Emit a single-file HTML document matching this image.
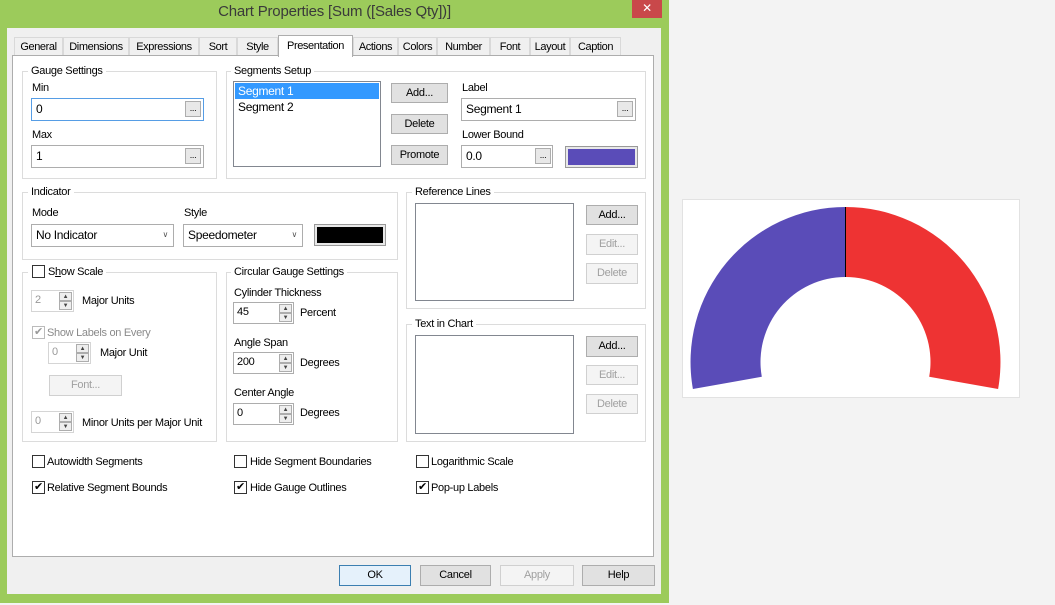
<!DOCTYPE html>
<html><head><meta charset="utf-8"><style>
*{box-sizing:border-box;margin:0;padding:0}
body{width:1055px;height:605px;background:#f3f3f3;position:relative;overflow:hidden;font-family:"Liberation Sans",sans-serif;font-size:11px;color:#000;letter-spacing:-0.3px}
.a{position:absolute}
.t{position:absolute;line-height:14px;white-space:nowrap}
.g{position:absolute;border:1px solid #dcdcdc}
.lg{position:absolute;background:#fff;padding:0 3px;line-height:14px;white-space:nowrap}
.in{position:absolute;background:#fff;border:1px solid #adadad;line-height:20px;padding-left:4px;font-size:12px}
.db{position:absolute;width:16px;height:16px;border:1px solid #adadad;background:#e8e8e8;font-size:9px;text-align:center;line-height:12px}
.bt{position:absolute;background:#e1e1e1;border:1px solid #adadad;text-align:center;line-height:18px}
.dis{color:#a0a0a0;background:#f4f4f4;border-color:#d0d0d0}
.cb{position:absolute;width:13px;height:13px;border:1px solid #333;background:#fff;font-size:11px;line-height:11px;text-align:center}
.sp{position:absolute;background:#fff;border:1px solid #adadad;line-height:19px;padding-left:3px}
.sp i{position:absolute;right:1px;width:13px;height:9px;border:1px solid #adadad;background:#eee;font-style:normal;font-size:6px;line-height:8px;text-align:center;color:#444}
.sp.d{border-color:#d5d5d5;color:#999}
.tab{position:absolute;top:37px;height:18px;background:#f0f0f0;border:1px solid #d9d9d9;border-bottom:none;line-height:18px;text-align:center;letter-spacing:-0.4px}
</style></head><body>
<div class="a" style="left:0;top:0;width:669px;height:603px;background:#9ccb5b"></div>
<div class="t" style="left:0;top:3px;width:669px;text-align:center;font-size:15px;line-height:18px;color:#3a3a3a;letter-spacing:-0.2px">Chart Properties [Sum ([Sales Qty])]</div>
<div class="a" style="left:632px;top:0;width:30px;height:18px;background:#c9484a;color:#fff;text-align:center;font-size:12px;line-height:17px">✕</div>
<div class="a" style="left:7px;top:28px;width:654px;height:566px;background:#f0f0f0"></div>
<div class="tab" style="left:14px;width:49px">General</div>
<div class="tab" style="left:63px;width:66px">Dimensions</div>
<div class="tab" style="left:129px;width:70px">Expressions</div>
<div class="tab" style="left:199px;width:38px">Sort</div>
<div class="tab" style="left:237px;width:41px">Style</div>
<div class="tab" style="left:353px;width:45px">Actions</div>
<div class="tab" style="left:398px;width:39px">Colors</div>
<div class="tab" style="left:437px;width:53px">Number</div>
<div class="tab" style="left:490px;width:40px">Font</div>
<div class="tab" style="left:530px;width:40px">Layout</div>
<div class="tab" style="left:570px;width:51px">Caption</div>
<div class="a" style="left:12px;top:55px;width:642px;height:502px;background:#fff;border:1px solid #adadad"></div>
<div class="tab" style="left:278px;top:35px;width:75px;height:22px;background:#fff;border-color:#adadad;line-height:20px">Presentation</div>

<div class="g" style="left:22px;top:71px;width:195px;height:108px"></div>
<div class="lg" style="left:28px;top:64px">Gauge Settings</div>
<div class="t" style="left:32px;top:81px">Min</div>
<div class="in" style="left:31px;top:98px;width:173px;height:23px;border-color:#569de5">0</div>
<div class="db" style="left:185px;top:101px">...</div>
<div class="t" style="left:32px;top:128px">Max</div>
<div class="in" style="left:31px;top:145px;width:173px;height:23px">1</div>
<div class="db" style="left:185px;top:148px">...</div>

<div class="g" style="left:226px;top:71px;width:420px;height:108px"></div>
<div class="lg" style="left:231px;top:64px">Segments Setup</div>
<div class="a" style="left:233px;top:81px;width:148px;height:86px;border:1px solid #828790;background:#fff"></div>
<div class="a" style="left:235px;top:83px;width:144px;height:16px;background:#3399ff"></div>
<div class="t" style="left:238px;top:84px;color:#fff;font-size:12px">Segment 1</div>
<div class="t" style="left:238px;top:100px;font-size:12px">Segment 2</div>
<div class="bt" style="left:391px;top:83px;width:57px;height:20px">Add...</div>
<div class="bt" style="left:391px;top:114px;width:57px;height:20px">Delete</div>
<div class="bt" style="left:391px;top:145px;width:57px;height:20px">Promote</div>
<div class="t" style="left:462px;top:81px">Label</div>
<div class="in" style="left:461px;top:98px;width:175px;height:23px">Segment 1</div>
<div class="db" style="left:617px;top:101px">...</div>
<div class="t" style="left:462px;top:128px">Lower Bound</div>
<div class="in" style="left:461px;top:145px;width:92px;height:23px">0.0</div>
<div class="db" style="left:535px;top:148px">...</div>
<div class="a" style="left:565px;top:146px;width:73px;height:22px;border:1px solid #999;padding:2px;background:#e8e8e8"><div style="width:100%;height:100%;background:#5a4cb8"></div></div>

<div class="g" style="left:22px;top:192px;width:376px;height:68px"></div>
<div class="lg" style="left:28px;top:185px">Indicator</div>
<div class="t" style="left:32px;top:206px">Mode</div>
<div class="in" style="left:31px;top:224px;width:143px;height:23px">No Indicator<span style="position:absolute;right:5px;top:0;font-size:8px;color:#555">&#x2228;</span></div>
<div class="t" style="left:184px;top:206px">Style</div>
<div class="in" style="left:183px;top:224px;width:120px;height:23px">Speedometer<span style="position:absolute;right:5px;top:0;font-size:8px;color:#555">&#x2228;</span></div>
<div class="a" style="left:314px;top:224px;width:72px;height:22px;border:1px solid #999;padding:2px;background:#e8e8e8"><div style="width:100%;height:100%;background:#000"></div></div>

<div class="g" style="left:406px;top:192px;width:240px;height:117px"></div>
<div class="lg" style="left:412px;top:185px">Reference Lines</div>
<div class="a" style="left:415px;top:203px;width:159px;height:98px;border:1px solid #828790"></div>
<div class="bt" style="left:586px;top:205px;width:52px;height:20px">Add...</div>
<div class="bt dis" style="left:586px;top:234px;width:52px;height:21px">Edit...</div>
<div class="bt dis" style="left:586px;top:263px;width:52px;height:21px">Delete</div>

<div class="g" style="left:22px;top:272px;width:195px;height:170px"></div>
<div class="lg" style="left:28px;top:265px;padding-left:20px">S<u>h</u>ow Scale</div>
<div class="cb" style="left:32px;top:265px"></div>
<div class="sp d" style="left:31px;top:290px;width:43px;height:22px">2<i style="top:1px">▲</i><i style="top:10px">▼</i></div>
<div class="t" style="left:82px;top:294px">Major Units</div>
<div class="cb" style="left:32px;top:326px;border-color:#bbb;color:#999">✔</div>
<div class="t" style="left:47px;top:326px;color:#8a8a8a">Show Labels on Every</div>
<div class="sp d" style="left:48px;top:342px;width:43px;height:22px">0<i style="top:1px">▲</i><i style="top:10px">▼</i></div>
<div class="t" style="left:100px;top:346px">Major Unit</div>
<div class="bt dis" style="left:49px;top:375px;width:73px;height:21px">Font...</div>
<div class="sp d" style="left:31px;top:411px;width:43px;height:22px">0<i style="top:1px">▲</i><i style="top:10px">▼</i></div>
<div class="t" style="left:82px;top:416px">Minor Units per Major Unit</div>

<div class="g" style="left:226px;top:272px;width:172px;height:170px"></div>
<div class="lg" style="left:231px;top:265px">Circular Gauge Settings</div>
<div class="t" style="left:234px;top:286px">Cylinder Thickness</div>
<div class="sp" style="left:233px;top:302px;width:61px;height:22px">45<i style="top:1px">▲</i><i style="top:10px">▼</i></div>
<div class="t" style="left:300px;top:306px">Percent</div>
<div class="t" style="left:234px;top:336px">Angle Span</div>
<div class="sp" style="left:233px;top:352px;width:61px;height:22px">200<i style="top:1px">▲</i><i style="top:10px">▼</i></div>
<div class="t" style="left:300px;top:356px">Degrees</div>
<div class="t" style="left:234px;top:386px">Center Angle</div>
<div class="sp" style="left:233px;top:403px;width:61px;height:22px">0<i style="top:1px">▲</i><i style="top:10px">▼</i></div>
<div class="t" style="left:300px;top:406px">Degrees</div>

<div class="g" style="left:406px;top:324px;width:240px;height:118px"></div>
<div class="lg" style="left:412px;top:317px">Text in Chart</div>
<div class="a" style="left:415px;top:335px;width:159px;height:99px;border:1px solid #828790"></div>
<div class="bt" style="left:586px;top:336px;width:52px;height:21px">Add...</div>
<div class="bt dis" style="left:586px;top:365px;width:52px;height:20px">Edit...</div>
<div class="bt dis" style="left:586px;top:394px;width:52px;height:20px">Delete</div>

<div class="cb" style="left:32px;top:455px"></div><div class="t" style="left:47px;top:455px">Autowidth Segments</div>
<div class="cb" style="left:234px;top:455px"></div><div class="t" style="left:250px;top:455px">Hide Segment Boundaries</div>
<div class="cb" style="left:416px;top:455px"></div><div class="t" style="left:431px;top:455px">Logarithmic Scale</div>
<div class="cb" style="left:32px;top:481px">✔</div><div class="t" style="left:47px;top:481px">Relative Segment Bounds</div>
<div class="cb" style="left:234px;top:481px">✔</div><div class="t" style="left:250px;top:481px">Hide Gauge Outlines</div>
<div class="cb" style="left:416px;top:481px">✔</div><div class="t" style="left:431px;top:481px">Pop-up Labels</div>

<div class="bt" style="left:339px;top:565px;width:72px;height:21px;border-color:#3c7fb1;background:#e5f1fb">OK</div>
<div class="bt" style="left:420px;top:565px;width:71px;height:21px">Cancel</div>
<div class="bt dis" style="left:500px;top:565px;width:74px;height:21px">Apply</div>
<div class="bt" style="left:582px;top:565px;width:73px;height:21px">Help</div>

<div class="a" style="left:682px;top:199px;width:338px;height:199px;background:#fff;border:1px solid #e2e2e2"></div>
<svg class="a" style="left:0;top:0" width="1055" height="605">
<path d="M845.5 207 A155 155 0 0 0 692.9 389 L761.8 376.8 A85 85 0 0 1 845.5 277 Z" fill="#5a4cb8"/>
<path d="M845.5 207 A155 155 0 0 1 998.1 389 L929.2 376.8 A85 85 0 0 0 845.5 277 Z" fill="#ee3333"/>
<line x1="845.5" y1="207" x2="845.5" y2="277" stroke="#000" stroke-width="1"/>
</svg>
</body></html>
